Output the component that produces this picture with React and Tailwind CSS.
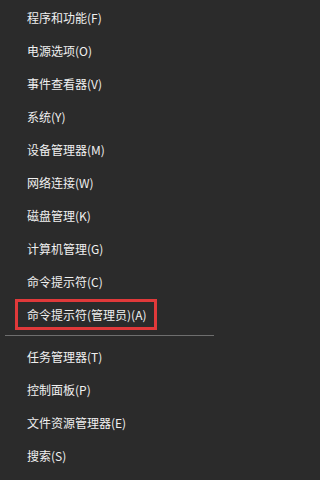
export default function App() {
  const top = [
    "程序和功能(F)",
    "电源选项(O)",
    "事件查看器(V)",
    "系统(Y)",
    "设备管理器(M)",
    "网络连接(W)",
    "磁盘管理(K)",
    "计算机管理(G)",
    "命令提示符(C)",
  ];
  const bottom = ["任务管理器(T)", "控制面板(P)", "文件资源管理器(E)", "搜索(S)"];
  const font = { fontFamily: '"Noto Sans CJK SC", "Noto Sans", sans-serif' };
  return (
    <div className="w-full min-h-screen bg-[#2b2b2b] text-[#f0f0f0] text-[12px] leading-none overflow-hidden" style={font}>
      <div className="w-[219px] flex flex-col pt-[1px]">
        {top.map((t) => (
          <div key={t} className="h-[33px] flex items-center pl-[27px]">
            {t}
          </div>
        ))}
        <div className="h-[33px] flex items-center">
          <div className="ml-[15px] w-[142px] h-[31px] border-[3px] border-[#e0393a] flex items-center pl-[9px]">
            命令提示符(管理员)(A)
          </div>
        </div>
        <div className="h-px bg-[#6e6e6e] mx-[5px] my-[4px]" />
        {bottom.map((t) => (
          <div key={t} className="h-[33px] flex items-center pl-[27px]">
            {t}
          </div>
        ))}
      </div>
    </div>
  );
}
